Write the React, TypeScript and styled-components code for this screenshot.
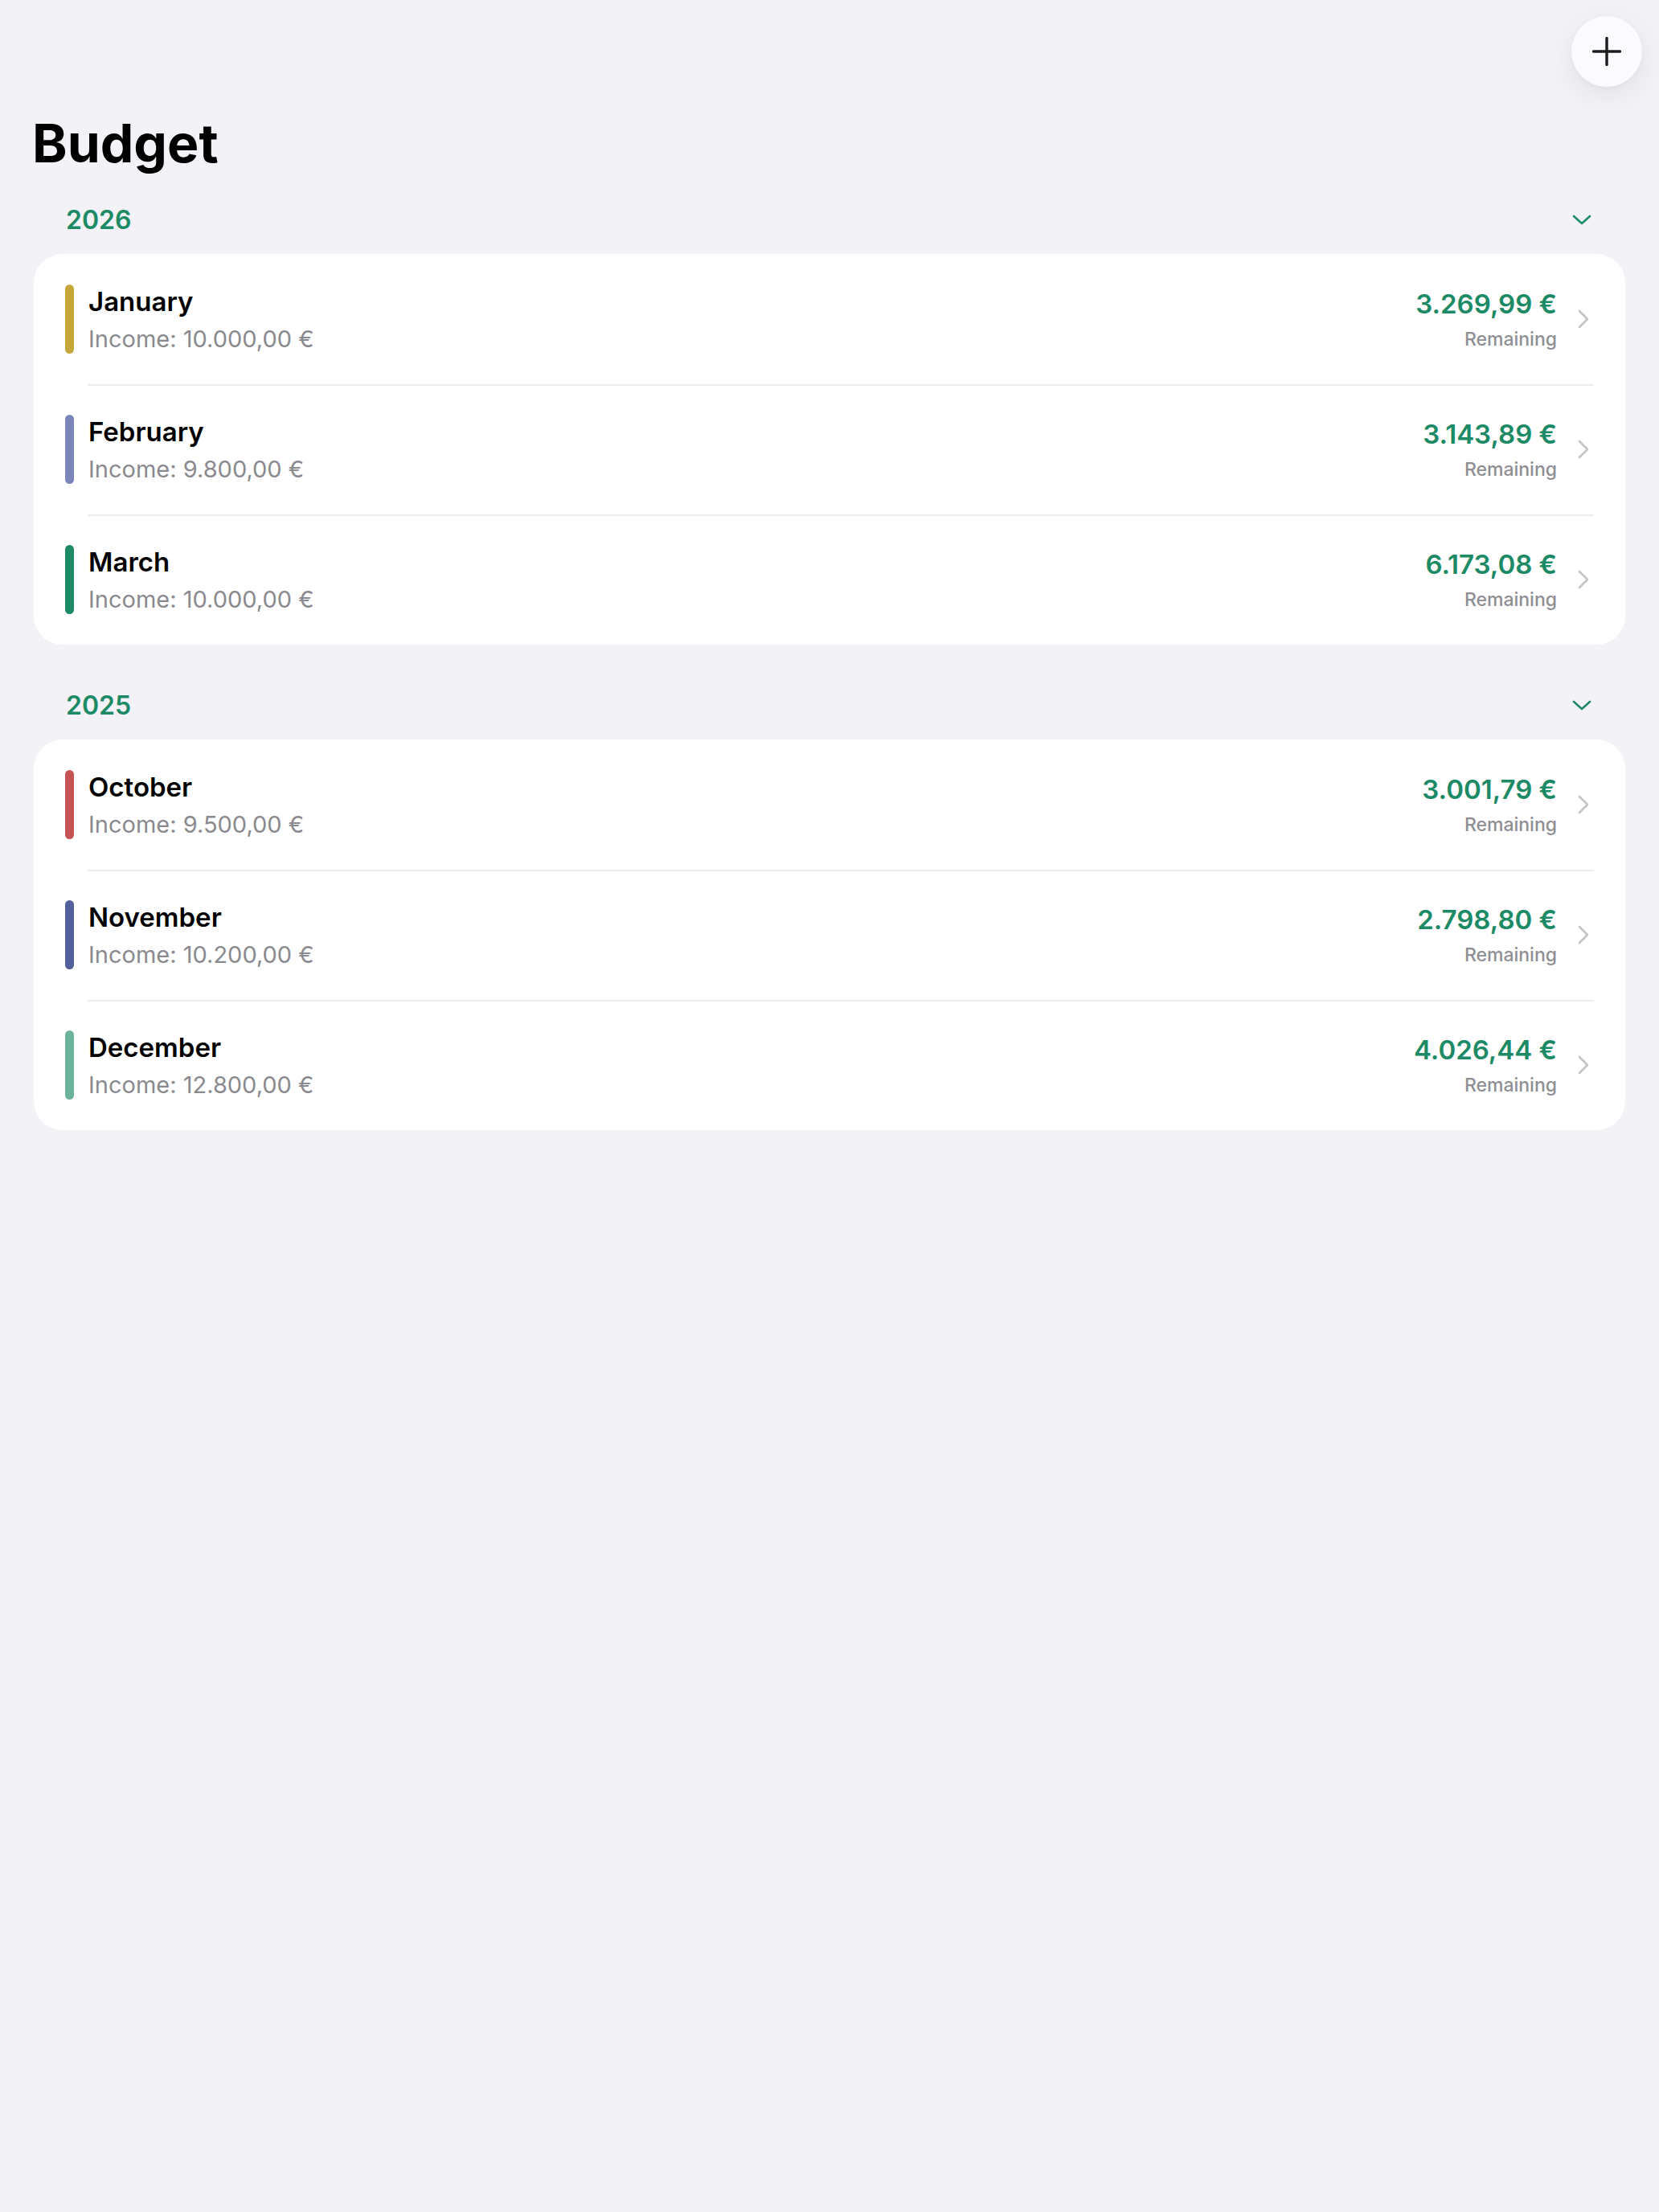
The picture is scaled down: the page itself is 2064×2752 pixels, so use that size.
import React from 'react'
import styled, { createGlobalStyle } from 'styled-components'

interface MonthData {
  name: string
  income: string
  remaining: string
  color: string
}

interface YearData {
  year: string
  months: MonthData[]
}

const YEARS: YearData[] = [
  {
    year: '2026',
    months: [
      { name: 'January', income: '10.000,00 €', remaining: '3.269,99 €', color: '#c6a73a' },
      { name: 'February', income: '9.800,00 €', remaining: '3.143,89 €', color: '#7a85ba' },
      { name: 'March', income: '10.000,00 €', remaining: '6.173,08 €', color: '#1d8a66' },
    ],
  },
  {
    year: '2025',
    months: [
      { name: 'October', income: '9.500,00 €', remaining: '3.001,79 €', color: '#c75455' },
      { name: 'November', income: '10.200,00 €', remaining: '2.798,80 €', color: '#53619a' },
      { name: 'December', income: '12.800,00 €', remaining: '4.026,44 €', color: '#6bb39a' },
    ],
  },
]

const GREEN = '#1d8a66'

const GlobalStyle = createGlobalStyle`
  html, body {
    margin: 0;
    padding: 0;
    background: #f2f2f7;
  }
  body {
    font-family: Inter, 'Noto Sans', sans-serif;
    color: #000;
    -webkit-font-smoothing: antialiased;
  }
`

const Page = styled.div`
  min-height: 2752px;
  box-sizing: border-box;
  padding: 20px 42px 0;
  background: #f2f2f7;
`

const TopBar = styled.div`
  display: flex;
  justify-content: flex-end;
  margin-right: -21px;
`

const AddButton = styled.button`
  width: 88px;
  height: 88px;
  border-radius: 50%;
  border: none;
  background: #fbfbfd;
  box-shadow: 0 10px 40px rgba(0, 0, 0, 0.08), 0 2px 6px rgba(0, 0, 0, 0.03);
  display: flex;
  align-items: center;
  justify-content: center;
  padding: 0;
  cursor: pointer;
`

const Title = styled.h1`
  margin: 31px 0 0 -2px;
  font-size: 66px;
  line-height: 78px;
  font-weight: 700;
  letter-spacing: 0;
`

const Section = styled.section`
  margin-top: 37px;

  & + & {
    margin-top: 56px;
  }
`

const SectionHeader = styled.div`
  display: flex;
  align-items: center;
  justify-content: space-between;
  padding: 0 42px 0 40px;
  margin-bottom: 22px;
`

const YearLabel = styled.span`
  font-size: 32px;
  line-height: 40px;
  font-weight: 600;
  color: ${GREEN};
`

const Card = styled.div`
  background: #fff;
  border-radius: 36px;
  overflow: hidden;
`

const Row = styled.div`
  position: relative;
  display: flex;
  align-items: center;
  height: 162px;
  padding: 0 44px 0 39px;

  & + &::before {
    content: '';
    position: absolute;
    top: 0;
    left: 67px;
    right: 39px;
    height: 2px;
    background: #ececf0;
  }
`

const ColorBar = styled.div<{ $color: string }>`
  width: 11px;
  height: 86px;
  border-radius: 6px;
  background: ${({ $color }) => $color};
  flex-shrink: 0;
`

const Info = styled.div`
  display: flex;
  flex-direction: column;
  gap: 9px;
  margin-left: 18px;
  flex: 1;
`

const MonthName = styled.div`
  font-size: 33px;
  line-height: 40px;
  font-weight: 600;
  color: #000;
`

const Income = styled.div`
  font-size: 29px;
  line-height: 36px;
  font-weight: 400;
  color: #8a8a8e;
`

const Amounts = styled.div`
  display: flex;
  flex-direction: column;
  align-items: flex-end;
  gap: 10px;
`

const Remaining = styled.div`
  font-size: 33px;
  line-height: 40px;
  font-weight: 600;
  color: ${GREEN};
`

const RemainingLabel = styled.div`
  font-size: 23px;
  line-height: 28px;
  font-weight: 500;
  color: #8e8e93;
`

const Chevron = styled.div`
  margin-left: 25px;
  display: flex;
  align-items: center;
`

const ChevronRight = () => (
  <svg width="16" height="24" viewBox="0 0 16 24" fill="none">
    <polyline points="3,2 13,12 3,22" stroke="#c4c4c8" strokeWidth="2.6" strokeLinecap="round" strokeLinejoin="round" />
  </svg>
)

const ChevronDown = () => (
  <svg width="24" height="14" viewBox="0 0 24 14" fill="none">
    <polyline points="2,2 12,11 22,2" stroke={GREEN} strokeWidth="2.6" strokeLinecap="round" strokeLinejoin="round" />
  </svg>
)

const PlusIcon = () => (
  <svg width="36" height="36" viewBox="0 0 36 36" fill="none">
    <path d="M18 1.5V34.5M1.5 18H34.5" stroke="#1c1c1e" strokeWidth="3.4" strokeLinecap="round" />
  </svg>
)

const App: React.FC = () => {
  return (
    <>
      <GlobalStyle />
      <Page>
        <TopBar>
          <AddButton aria-label="Add">
            <PlusIcon />
          </AddButton>
        </TopBar>
        <Title>Budget</Title>

        {YEARS.map((group) => (
          <Section key={group.year}>
            <SectionHeader>
              <YearLabel>{group.year}</YearLabel>
              <ChevronDown />
            </SectionHeader>
            <Card>
              {group.months.map((month) => (
                <Row key={month.name}>
                  <ColorBar $color={month.color} />
                  <Info>
                    <MonthName>{month.name}</MonthName>
                    <Income>Income: {month.income}</Income>
                  </Info>
                  <Amounts>
                    <Remaining>{month.remaining}</Remaining>
                    <RemainingLabel>Remaining</RemainingLabel>
                  </Amounts>
                  <Chevron>
                    <ChevronRight />
                  </Chevron>
                </Row>
              ))}
            </Card>
          </Section>
        ))}
      </Page>
    </>
  )
}

export default App
